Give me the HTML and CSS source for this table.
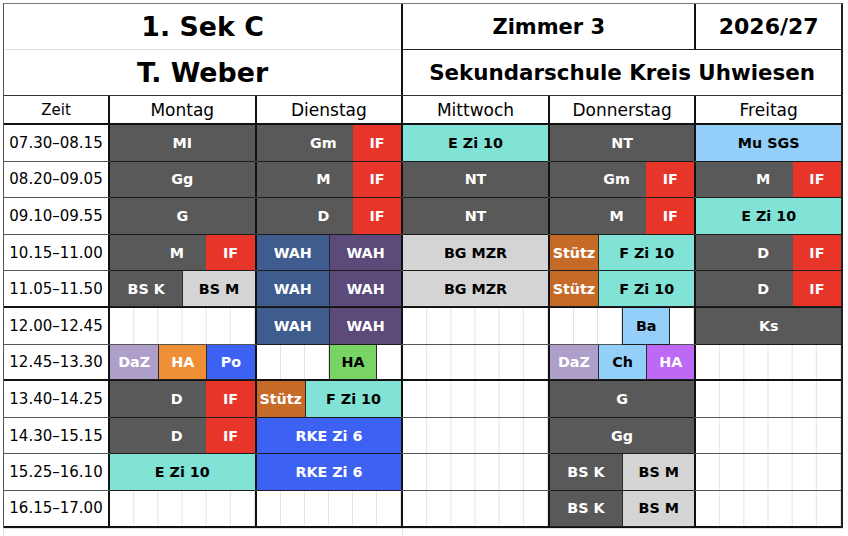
FILE: index.html
```html
<!DOCTYPE html>
<html lang="de">
<head>
<meta charset="utf-8">
<title>Stundenplan 1. Sek C</title>
<link rel="stylesheet" href="styles.css">
</head>
<body>
<div class="sheet">
  <div class="head">
    <div class="t1">1. Sek C</div>
    <div class="t2">T. Weber</div>
    <div class="room">Zimmer 3</div>
    <div class="year">2026/27</div>
    <div class="school">Sekundarschule Kreis Uhwiesen</div>
  </div>

  <div class="row hdr">
    <div class="time">Zeit</div>
    <div class="dh">Montag</div>
    <div class="dh">Dienstag</div>
    <div class="dh">Mittwoch</div>
    <div class="dh">Donnerstag</div>
    <div class="dh">Freitag</div>
  </div>

  <div class="row">
    <div class="time">07.30–08.15</div>
    <div class="day"><div class="b dk full">MI</div></div>
    <div class="day"><div class="b dk full pad">Gm</div><div class="b if c56">IF</div></div>
    <div class="day"><div class="b tq full">E Zi 10</div></div>
    <div class="day"><div class="b dk full">NT</div></div>
    <div class="day"><div class="b lb full">Mu SGS</div></div>
  </div>

  <div class="row">
    <div class="time">08.20–09.05</div>
    <div class="day"><div class="b dk full">Gg</div></div>
    <div class="day"><div class="b dk full pad">M</div><div class="b if c56">IF</div></div>
    <div class="day"><div class="b dk full">NT</div></div>
    <div class="day"><div class="b dk full pad">Gm</div><div class="b if c56">IF</div></div>
    <div class="day"><div class="b dk full pad">M</div><div class="b if c56">IF</div></div>
  </div>

  <div class="row">
    <div class="time">09.10–09.55</div>
    <div class="day"><div class="b dk full">G</div></div>
    <div class="day"><div class="b dk full pad">D</div><div class="b if c56">IF</div></div>
    <div class="day"><div class="b dk full">NT</div></div>
    <div class="day"><div class="b dk full pad">M</div><div class="b if c56">IF</div></div>
    <div class="day"><div class="b tq full">E Zi 10</div></div>
  </div>

  <div class="row">
    <div class="time">10.15–11.00</div>
    <div class="day"><div class="b dk full pad">M</div><div class="b if c56">IF</div></div>
    <div class="day"><div class="b wb c13">WAH</div><div class="b wp c46 bl">WAH</div></div>
    <div class="day"><div class="b lg full">BG MZR</div></div>
    <div class="day"><div class="b st c12">Stütz</div><div class="b tq c36 bl">F Zi 10</div></div>
    <div class="day"><div class="b dk full pad">D</div><div class="b if c56">IF</div></div>
  </div>

  <div class="row brk">
    <div class="time">11.05–11.50</div>
    <div class="day"><div class="b dk c13">BS K</div><div class="b lg c46 bl">BS M</div></div>
    <div class="day"><div class="b wb c13">WAH</div><div class="b wp c46 bl">WAH</div></div>
    <div class="day"><div class="b lg full">BG MZR</div></div>
    <div class="day"><div class="b st c12">Stütz</div><div class="b tq c36 bl">F Zi 10</div></div>
    <div class="day"><div class="b dk full pad">D</div><div class="b if c56">IF</div></div>
  </div>

  <div class="row">
    <div class="time">12.00–12.45</div>
    <div class="day"></div>
    <div class="day"><div class="b wb c13">WAH</div><div class="b wp c46 bl">WAH</div></div>
    <div class="day"></div>
    <div class="day"><div class="b lb c45 bl br">Ba</div></div>
    <div class="day"><div class="b dk full">Ks</div></div>
  </div>

  <div class="row brk">
    <div class="time">12.45–13.30</div>
    <div class="day"><div class="b dz c12">DaZ</div><div class="b ho c34 bl">HA</div><div class="b rb c56 bl">Po</div></div>
    <div class="day"><div class="b hg c45 bl br">HA</div></div>
    <div class="day"></div>
    <div class="day"><div class="b dz c12">DaZ</div><div class="b lb c34 bl">Ch</div><div class="b hp c56 bl">HA</div></div>
    <div class="day"></div>
  </div>

  <div class="row">
    <div class="time">13.40–14.25</div>
    <div class="day"><div class="b dk full pad">D</div><div class="b if c56">IF</div></div>
    <div class="day"><div class="b st c12">Stütz</div><div class="b tq c36 bl">F Zi 10</div></div>
    <div class="day"></div>
    <div class="day"><div class="b dk full">G</div></div>
    <div class="day"></div>
  </div>

  <div class="row">
    <div class="time">14.30–15.15</div>
    <div class="day"><div class="b dk full pad">D</div><div class="b if c56">IF</div></div>
    <div class="day"><div class="b rb full">RKE Zi 6</div></div>
    <div class="day"></div>
    <div class="day"><div class="b dk full">Gg</div></div>
    <div class="day"></div>
  </div>

  <div class="row">
    <div class="time">15.25–16.10</div>
    <div class="day"><div class="b tq full">E Zi 10</div></div>
    <div class="day"><div class="b rb full">RKE Zi 6</div></div>
    <div class="day"></div>
    <div class="day"><div class="b dk c13">BS K</div><div class="b lg c46 bl">BS M</div></div>
    <div class="day"></div>
  </div>

  <div class="row last">
    <div class="time">16.15–17.00</div>
    <div class="day"></div>
    <div class="day"></div>
    <div class="day"></div>
    <div class="day"><div class="b dk c13">BS K</div><div class="b lg c46 bl">BS M</div></div>
    <div class="day"></div>
  </div>
</div>
<div class="foot"><div class="foot-right"></div></div>
</body>
</html>
```

FILE: styles.css
```css
* { box-sizing: border-box; }

body {
  margin: 0;
  background: #fff;
  color: #000;
  font-family: "DejaVu Sans", Verdana, sans-serif;
}

.sheet {
  margin: 3px 0 0 3px;
  width: 840px;
  border-top: 1px solid #777;
  border-left: 1px solid #555;
  border-right: 2px solid #222;
}

/* title block */
.head {
  display: grid;
  grid-template-columns: 104px repeat(5, 1fr);
  grid-template-rows: 46px 45px;
  border-bottom: 1px solid #333;
  font-weight: bold;
}
.head > div {
  display: flex;
  align-items: center;
  justify-content: center;
  white-space: nowrap;
}
.t1 {
  grid-column: 1 / 4;
  grid-row: 1;
  border-bottom: 1px solid #e2e2e2;
  font-size: 26.8px;
}
.t2 {
  grid-column: 1 / 4;
  grid-row: 2;
  font-size: 26.8px;
}
.room {
  grid-column: 4 / 6;
  grid-row: 1;
  border-left: 2px solid #111;
  border-bottom: 1px solid #222;
  font-size: 21px;
}
.year {
  grid-column: 6 / 7;
  grid-row: 1;
  border-left: 2px solid #111;
  border-bottom: 1px solid #222;
  font-size: 22px;
}
.school {
  grid-column: 4 / 7;
  grid-row: 2;
  border-left: 2px solid #111;
  font-size: 21.4px;
}

/* timetable rows */
.row {
  display: grid;
  grid-template-columns: 104px repeat(5, 1fr);
  height: 36.6px;
  border-bottom: 1px solid #555;
}
.row.hdr {
  height: 29px;
  border-bottom: 2px solid #111;
  font-size: 17px;
}
.row.brk,
.row.last {
  border-bottom: 2px solid #111;
}

.time {
  display: flex;
  align-items: center;
  justify-content: center;
  font-size: 15px;
  white-space: nowrap;
}
.dh {
  display: flex;
  align-items: center;
  justify-content: center;
  border-left: 2px solid #111;
}

.day {
  display: grid;
  grid-template-columns: repeat(6, 1fr);
  grid-template-rows: 100%;
  border-left: 2px solid #111;
  background-image: linear-gradient(to right, transparent calc(100% - 1px), #e3e3e3 0);
  background-size: calc(100% / 6) 100%;
}

/* lesson blocks */
.b {
  grid-row: 1;
  display: flex;
  align-items: center;
  justify-content: center;
  margin-bottom: -1px;
  border-bottom: 1px solid #1c1c1c;
  font-size: 14.3px;
  font-weight: bold;
  color: #fff;
  white-space: nowrap;
  overflow: hidden;
}
.full { grid-column: 1 / 7; }
.c12 { grid-column: 1 / 3; }
.c34 { grid-column: 3 / 5; }
.c56 { grid-column: 5 / 7; }
.c13 { grid-column: 1 / 4; }
.c46 { grid-column: 4 / 7; }
.c36 { grid-column: 3 / 7; }
.c45 { grid-column: 4 / 6; }
.pad { padding-right: 11px; }
.bl { border-left: 1px solid #2a2a2a; }
.br { border-right: 1px solid #2a2a2a; }

.dk { background: #595959; }
.if { background: #e8352a; }
.tq { background: #80e3d5; color: #000; }
.lb { background: #94cff9; color: #000; }
.lg { background: #d4d4d4; color: #000; }
.wb { background: #3e5d8e; }
.wp { background: #5b4a7a; }
.st { background: #c66a28; }
.rb { background: #3d62f3; }
.dz { background: #ae9fca; }
.ho { background: #ef8f35; }
.hg { background: #78d565; color: #000; }
.hp { background: #be69f5; }

/* start of the next sheet below */
.foot {
  margin-left: 3px;
  width: 840px;
  height: 8px;
  display: grid;
  grid-template-columns: 398px 1fr;
  border-top: 1px solid #e0e0e0;
  border-left: 1px solid #ddd;
}
.foot-right {
  grid-column: 2;
  border-left: 1px solid #e0e0e0;
}
```
